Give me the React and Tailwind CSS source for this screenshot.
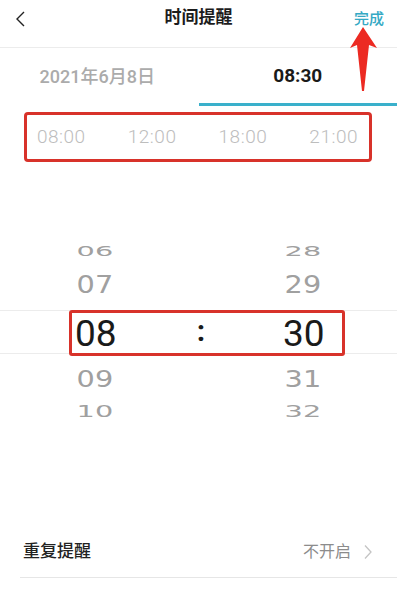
import React from "react";

const cjk = { fontFamily: 'Roboto, "Noto Sans CJK SC", sans-serif' };

const presets = ["08:00", "12:00", "18:00", "21:00"];

const FadedRow = ({ left, right, h, squash }) => (
  <div className={`flex items-center ${h}`}>
    <div className="ml-[75px] w-[40px] flex justify-center">
      <span className={`inline-block font-['DejaVu_Sans'] text-[25px] leading-none text-[#a0a0a0] scale-x-[1.15] ${squash}`}>{left}</span>
    </div>
    <div className="flex-1" />
    <div className="mr-[74px] w-[40px] flex justify-center">
      <span className={`inline-block font-['DejaVu_Sans'] text-[25px] leading-none text-[#a0a0a0] scale-x-[1.15] ${squash}`}>{right}</span>
    </div>
  </div>
);

const ReminderArrow = () => (
  <svg className="absolute left-0 top-0 pointer-events-none" width="397" height="100" viewBox="0 0 397 100">
    <polygon points="363,27 377,48 369,45 364,91 362,91 357,45 350,48" fill="#ec2a22" />
  </svg>
);

export default function App() {
  return (
    <div className="relative w-[397px] h-[597px] bg-white overflow-hidden" style={cjk}>
      {/* header */}
      <div className="relative flex h-[48px] items-center justify-center border-b border-[#ececec]">
        <svg className="absolute left-[14px] top-[10px]" width="14" height="18" viewBox="0 0 14 18">
          <path d="M10 2 L3 9 L10 16" fill="none" stroke="#222" strokeWidth="1.4" />
        </svg>
        <span className="text-[17px] font-bold text-[#1c1c1c] -mt-[12px]">时间提醒</span>
        <span className="absolute left-[354px] top-[8px] text-[15px] font-medium text-[#35a9c4]">完成</span>
      </div>

      {/* tabs */}
      <div className="flex h-[58px]">
        <div className="flex w-1/2 items-center justify-center pb-[2px]">
          <span className="text-[18px] font-medium text-[#ababab] -ml-[4px]">2021年6月8日</span>
        </div>
        <div className="flex w-1/2 items-center justify-center border-b-[3px] border-[#3ab0cb]">
          <span className="text-[19px] font-bold text-[#1a1a1a] pt-[1px]">08:30</span>
        </div>
      </div>

      {/* quick times */}
      <div className="ml-[24px] mt-[6px] flex h-[50px] w-[348px] items-center justify-between rounded-[4px] border-[3px] border-[#d8322a] pl-[10px] pr-[11px]">
        {presets.map((t) => (
          <span key={t} className="text-[19px] font-light tracking-[0.5px] text-[#bdbdbd]">{t}</span>
        ))}
      </div>

      {/* picker */}
      <div className="mt-[73px]">
        <FadedRow left="06" right="28" h="h-[33px]" squash="scale-y-[0.55]" />
        <FadedRow left="07" right="29" h="h-[33px]" squash="scale-y-100" />
        <div className="h-[9px]" />
        <div className="h-[44px] border-y border-[#ececec]">
          <div className="ml-[69px] -mt-[1px] flex h-[46px] w-[276px] items-center rounded-[3px] border-[3px] border-[#d8322a]">
            <div className="ml-[3px] w-[40px] text-[37px] leading-none text-[#1a1a1a]">08</div>
            <div className="flex-1 text-center text-[30px] font-bold leading-none text-[#1a1a1a] -mt-[4px] pl-[4px]">:</div>
            <div className="mr-[19px] w-[40px] text-[37px] leading-none text-[#1a1a1a]">30</div>
          </div>
        </div>
        <div className="h-[8px]" />
        <FadedRow left="09" right="31" h="h-[32px]" squash="scale-y-95" />
        <FadedRow left="10" right="32" h="h-[34px]" squash="scale-y-[0.6]" />
      </div>

      {/* repeat */}
      <div className="mt-[98px] ml-[20px] flex h-[52px] items-center border-b border-[#e6e6e6] pr-[24px]">
        <span className="ml-[3px] text-[17px] font-medium text-[#222]">重复提醒</span>
        <span className="ml-auto text-[16px] text-[#8c8c8c]">不开启</span>
        <svg className="ml-[12px]" width="10" height="16" viewBox="0 0 10 16">
          <path d="M2 1.5 L8 8 L2 14.5" fill="none" stroke="#c4c4c4" strokeWidth="1.3" />
        </svg>
      </div>

      <ReminderArrow />
    </div>
  );
}
